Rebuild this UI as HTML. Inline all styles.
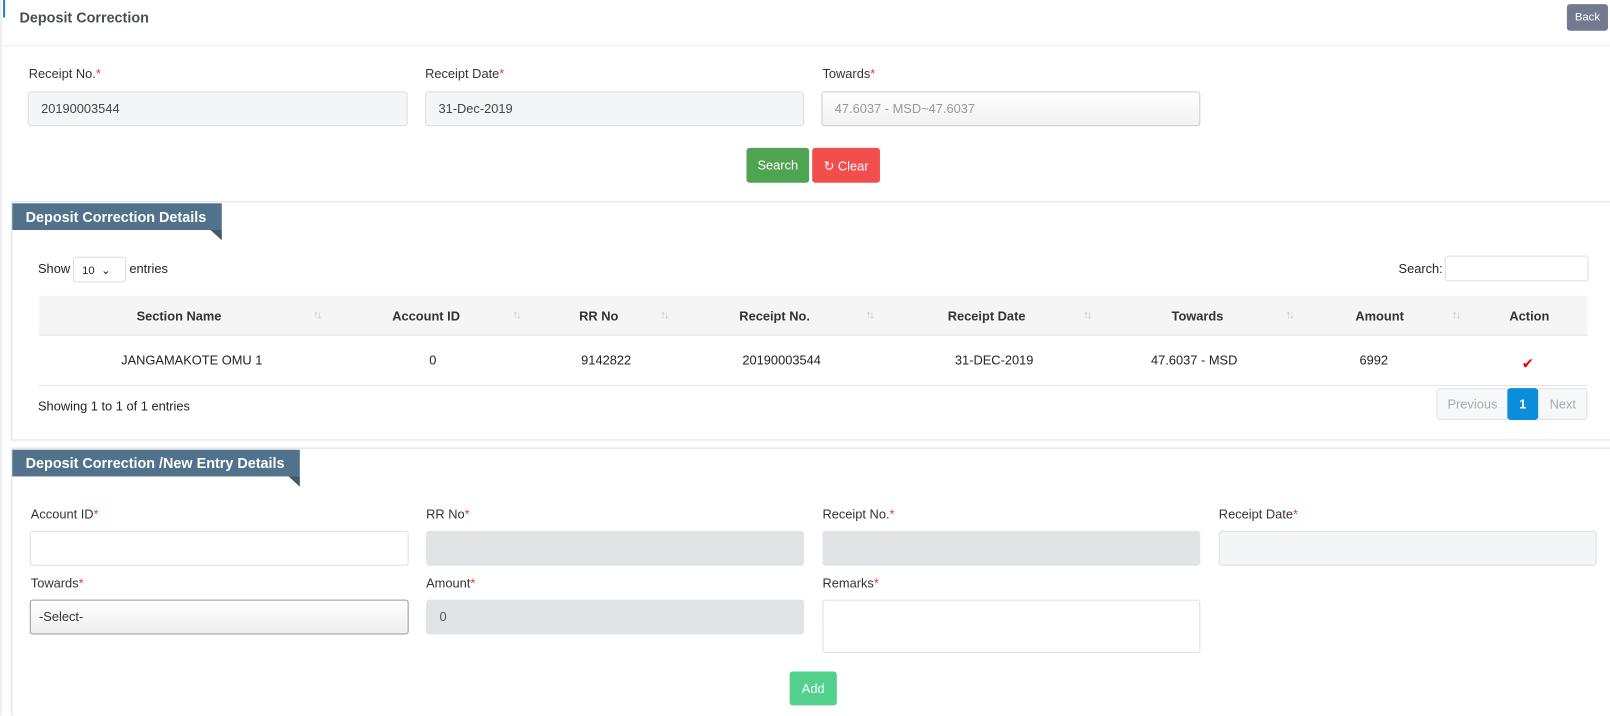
<!DOCTYPE html>
<html><head><meta charset="utf-8">
<style>
*{box-sizing:border-box;margin:0;padding:0}
html,body{width:1610px;height:716px;overflow:hidden;background:#fff}
#root{position:absolute;left:0;top:0;width:1568px;height:697px;overflow:hidden;transform:scale(1.0268);transform-origin:0 0;font-family:"Liberation Sans",Arial,sans-serif;font-size:12.5px;color:#212529}
.a{position:absolute}
.lbl{position:absolute;font-size:12.5px;color:#333}
.lbl i{color:#e53935;font-style:normal}
.inp{position:absolute;border:1px solid #dcdfe3;border-radius:3px;background:#f4f5f7;font-size:12.5px;color:#444;padding-left:12px;display:flex;align-items:center}
.w{background:#fff}
.g{background:#e1e4e7;border-color:#e1e4e7}
.btn{position:absolute;color:#fff;border-radius:3px;display:flex;align-items:center;justify-content:center;font-size:12.5px}
.rib{position:absolute;background:#52718a;color:#fff;font-weight:bold;font-size:14px;padding-left:13px;display:flex;align-items:center}
.fold{position:absolute;width:0;height:0;border-top:10px solid #3e5a70;border-left:11px solid transparent}
.th{position:absolute;top:288px;height:39px;display:flex;align-items:center;font-weight:bold;font-size:12.5px;color:#333}
.td{position:absolute;top:327px;height:48px;display:flex;align-items:center;font-size:12.5px;color:#222}
.s{position:absolute;top:301px;color:#c4c4c4;font-size:11px;letter-spacing:-2px}
</style></head><body><div id="root">
<div class="a" style="left:0;top:0;width:2px;height:697px;background:#eef0f5"></div>
<div class="a" style="left:3px;top:0;width:2px;height:17px;background:#2a7dc0"></div>
<div class="a" style="left:19px;top:9px;font-weight:bold;font-size:14px;color:#4a4f57">Deposit Correction</div>
<div class="btn" style="left:1526px;top:4px;width:40px;height:26px;background:#737a8f;font-size:11px">Back</div>
<div class="a" style="left:2px;top:44px;width:1608px;height:1px;background:#ececec"></div>

<div class="lbl" style="left:28px;top:65px">Receipt No.<i>*</i></div>
<div class="lbl" style="left:414px;top:65px">Receipt Date<i>*</i></div>
<div class="lbl" style="left:801px;top:65px">Towards<i>*</i></div>
<div class="inp" style="left:27px;top:89px;width:370px;height:34px">20190003544</div>
<div class="inp" style="left:414px;top:89px;width:369px;height:34px">31-Dec-2019</div>
<div class="inp" style="left:800px;top:89px;width:369px;height:34px;color:#999;background:linear-gradient(#fff,#f1f1f1);border-color:#ccc">47.6037 - MSD~47.6037</div>
<div class="btn" style="left:727px;top:144px;width:61px;height:34px;background:#4fa452">Search</div>
<div class="btn" style="left:791px;top:144px;width:66px;height:34px;background:#f24e4e">&#x21bb;&nbsp;Clear</div>

<div class="a" style="left:11px;top:196px;width:1620px;height:233px;border:1px solid #ddd"></div>
<div class="rib" style="left:12px;top:198px;width:204px;height:26px">Deposit Correction Details</div>
<div class="fold" style="left:205px;top:224px"></div>
<div class="a" style="left:37px;top:255px;font-size:12.5px">Show</div>
<div class="a" style="left:71px;top:250px;width:52px;height:25px;border:1px solid #ddd;border-radius:3px;font-size:11px;padding:6px 0 0 8px">10 &nbsp;&#8964;</div>
<div class="a" style="left:126px;top:255px">entries</div>
<div class="a" style="left:1362px;top:255px">Search:</div>
<div class="a" style="left:1407px;top:249px;width:140px;height:25px;border:1px solid #ddd;border-radius:3px"></div>
<div class="a" style="left:38px;top:288px;width:1508px;height:39px;background:#f5f5f5;border-bottom:1px solid #e5e5e5"></div>
<div class="th" style="left:133px">Section Name</div>
<div class="th" style="left:382px">Account ID</div>
<div class="th" style="left:564px">RR No</div>
<div class="th" style="left:720px">Receipt No.</div>
<div class="th" style="left:923px">Receipt Date</div>
<div class="th" style="left:1141px">Towards</div>
<div class="th" style="left:1320px">Amount</div>
<div class="th" style="left:1470px">Action</div>
<div class="s" style="left:305px">↑↓</div><div class="s" style="left:499px">↑↓</div><div class="s" style="left:643px">↑↓</div><div class="s" style="left:843px">↑↓</div><div class="s" style="left:1055px">↑↓</div><div class="s" style="left:1252px">↑↓</div><div class="s" style="left:1414px">↑↓</div>
<div class="td" style="left:118px">JANGAMAKOTE OMU 1</div>
<div class="td" style="left:418px">0</div>
<div class="td" style="left:566px">9142822</div>
<div class="td" style="left:723px">20190003544</div>
<div class="td" style="left:930px">31-DEC-2019</div>
<div class="td" style="left:1121px">47.6037 - MSD</div>
<div class="td" style="left:1324px">6992</div>
<div class="td" style="left:1482px;color:#e00;font-size:14px;top:330px">&#10004;</div>
<div class="a" style="left:38px;top:375px;width:1508px;height:1px;background:#e5e5e5"></div>
<div class="a" style="left:37px;top:389px">Showing 1 to 1 of 1 entries</div>
<div class="a" style="left:1399px;top:378px;width:70px;height:31px;border:1px solid #e0e3e6;border-radius:3px 0 0 3px;background:#f7f8f9;color:#aaa;display:flex;align-items:center;justify-content:center">Previous</div>
<div class="a" style="left:1468px;top:378px;width:30px;height:31px;background:#0a8ddb;border-radius:3px;color:#fff;display:flex;align-items:center;justify-content:center;font-weight:bold">1</div>
<div class="a" style="left:1498px;top:378px;width:48px;height:31px;border:1px solid #e0e3e6;border-radius:0 3px 3px 0;background:#f7f8f9;color:#aaa;display:flex;align-items:center;justify-content:center">Next</div>

<div class="a" style="left:11px;top:436px;width:1620px;height:300px;border:1px solid #ddd"></div>
<div class="rib" style="left:12px;top:438px;width:280px;height:26px">Deposit Correction /New Entry Details</div>
<div class="fold" style="left:281px;top:464px"></div>
<div class="lbl" style="left:30px;top:494px">Account ID<i>*</i></div>
<div class="lbl" style="left:415px;top:494px">RR No<i>*</i></div>
<div class="lbl" style="left:801px;top:494px">Receipt No.<i>*</i></div>
<div class="lbl" style="left:1187px;top:494px">Receipt Date<i>*</i></div>
<div class="inp w" style="left:29px;top:517px;width:369px;height:34px"></div>
<div class="inp g" style="left:415px;top:517px;width:368px;height:34px"></div>
<div class="inp g" style="left:801px;top:517px;width:368px;height:34px"></div>
<div class="inp" style="left:1187px;top:517px;width:368px;height:34px"></div>
<div class="lbl" style="left:30px;top:561px">Towards<i>*</i></div>
<div class="lbl" style="left:415px;top:561px">Amount<i>*</i></div>
<div class="lbl" style="left:801px;top:561px">Remarks<i>*</i></div>
<div class="inp" style="left:29px;top:584px;width:369px;height:34px;background:linear-gradient(#fff,#eee);border-color:#999;color:#333;padding-left:8px">-Select-</div>
<div class="inp g" style="left:415px;top:584px;width:368px;height:34px;color:#555">0</div>
<div class="inp w" style="left:801px;top:584px;width:368px;height:52px"></div>
<div class="btn" style="left:769px;top:654px;width:46px;height:33px;background:#52d18d">Add</div>
</div></body></html>
